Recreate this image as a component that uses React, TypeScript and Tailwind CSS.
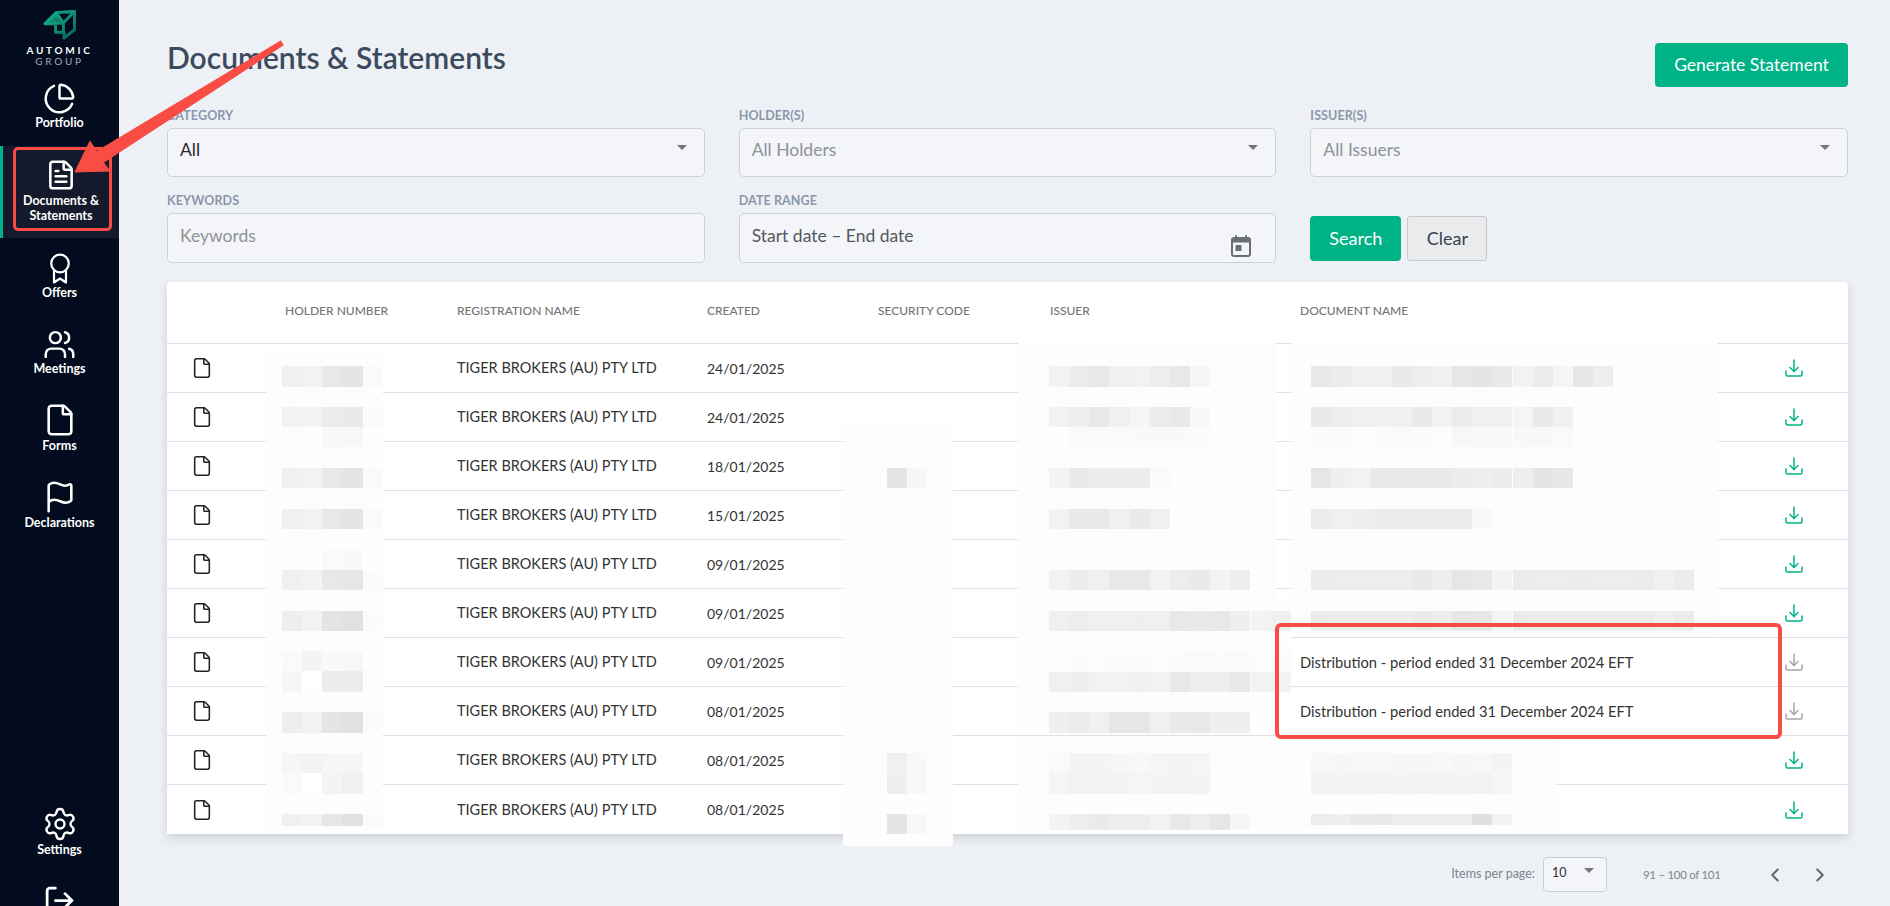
import React from "react";
import { ChartPie, FileText, Users, File, Flag, Settings, LogOut, ChevronLeft, ChevronRight } from "lucide-react";

type Strip = [number, number, number, string[]];

const A = ["f0", "f2", "e8", "e5", "fa"];
const strips: Strip[] = [
  [366, 21, 282, A],
  [407, 20, 282, ["f2", "f3", "ec", "ea", "fb"]],
  [427, 20, 282, ["fc", "fe", "f8", "f7", "fe"]],
  [468, 20, 282, A],
  [509, 20, 282, A],
  [550, 20, 282, ["fe", "fe", "fa", "f9", "fe"]],
  [570, 20, 282, ["f0", "f3", "e8", "e6", "fb"]],
  [611, 20, 282, ["ee", "f2", "e4", "e1", "fb"]],
  [651, 20, 282, ["fa", "f4", "f9", "f7", "fe"]],
  [671, 21, 282, ["f6", "ff", "ec", "ec", "fc"]],
  [712, 21, 282, ["ee", "f2", "e5", "e2", "fb"]],
  [753, 20, 282, ["f6", "f3", "f6", "f6", "fe"]],
  [773, 21, 282, ["fa", "ff", "f4", "f0", "fe"]],
  [814, 12, 282, ["f0", "f3", "e6", "e2", "fb"]],

  [366, 21, 1049, ["f2", "ec", "e8", "f0", "f2", "ed", "e8", "f6"]],
  [407, 20, 1049, ["f2", "ef", "e9", "f1", "f5", "ec", "e9", "f8"]],
  [427, 20, 1049, ["fe", "fa", "fa", "fa", "f9", "f9", "f9", "fb"]],
  [468, 20, 1049, ["f4", "ea", "ec", "ec", "ec", "fa"]],
  [509, 20, 1049, ["f2", "e9", "e9", "f1", "ea", "f0"]],
  [570, 20, 1049, ["f2", "ec", "f0", "e8", "e8", "f2", "ed", "ea", "f3", "ee"]],
  [611, 20, 1049, ["f0", "ed", "f0", "f0", "ef", "f0", "e8", "ea", "e8", "ef", "f3", "f0"]],
  [651, 21, 1049, ["fd", "fb", "fc", "fb", "fb", "fc", "fb", "fa", "fb", "fa", "fc", "fb"]],
  [672, 20, 1049, ["f0", "ee", "f2", "f2", "f0", "f2", "e8", "ee", "ee", "e8", "f2", "f2"]],
  [712, 21, 1049, ["ef", "eb", "f0", "e6", "e6", "f0", "ea", "e8", "ef", "ef"]],
  [753, 20, 1049, ["fa", "f4", "f4", "f6", "f8", "f5", "f3", "f5"]],
  [773, 21, 1049, ["f5", "f2", "f3", "f3", "f5", "f3", "f2", "f4"]],
  [814, 16, 1049, ["f3", "ee", "ea", "ee", "ee", "f2", "e8", "ee", "e6", "f6"]],

  [366, 21, 1311, ["e8", "ec", "f0", "f0", "ea", "ee", "f0", "e6", "e5", "e9", "f2", "ec", "f5", "e6", "ee"]],
  [407, 20, 1311, ["ea", "ee", "f0", "f0", "f0", "ea", "f2", "ec", "f0", "f0", "f5", "ea", "f0"]],
  [427, 20, 1311, ["fb", "fa", "fd", "fb", "fa", "fb", "fd", "f7", "f8", "f8", "f8", "f7", "fa"]],
  [468, 20, 1311, ["e6", "ef", "f2", "e8", "e8", "e8", "ea", "ec", "ee", "ec", "ee", "e5", "e7"]],
  [509, 20, 1311, ["ec", "f0", "ee", "ec", "ec", "ec", "ec", "ec", "f8"]],
  [570, 20, 1311, ["eb", "ed", "ed", "ed", "ed", "ea", "ee", "e6", "e8", "f4", "eb", "ed", "ed", "ec", "ed", "ed", "ec", "f0", "ec"]],
  [611, 20, 1311, ["eb", "ed", "ed", "ed", "ed", "ea", "ee", "e6", "e8", "f4", "eb", "ed", "ed", "ec", "ed", "ed", "ec", "f0", "ec"]],
  [753, 20, 1311, ["f8", "f6", "f8", "f8", "f6", "f6", "f8", "f6", "f7", "f4"]],
  [773, 21, 1311, ["f4", "f4", "f4", "f3", "f4", "f3", "f4", "f4", "f2", "f6"]],
  [814, 11, 1311, ["ed", "ef", "ea", "e8", "ee", "ee", "ee", "ee", "e0", "f2"]],

  [468, 20, 887, ["e4", "f6"]],
  [753, 20, 887, ["f0", "f8"]],
  [773, 21, 887, ["ee", "f8"]],
  [814, 20, 887, ["e4", "f8"]],
];

const patches: [number, number, number, number][] = [
  [266, 352, 117, 478],
  [843, 425, 110, 421],
  [1018, 343, 258, 290],
  [1291, 343, 427, 290],
  [1018, 600, 273, 83],
  [1018, 683, 257, 52],
  [1018, 737, 539, 93],
];

const dates = [
  "24/01/2025", "24/01/2025", "18/01/2025", "15/01/2025", "09/01/2025",
  "09/01/2025", "09/01/2025", "08/01/2025", "08/01/2025", "08/01/2025",
];

const ROW = "grid grid-cols-[118px_172px_250px_171px_172px_250px_1fr_108px] items-center";

function Download({ muted }: { muted?: boolean }) {
  return (
    <svg width="20" height="20" viewBox="0 0 20 20" fill="none" stroke={muted ? "#a3a5a8" : "#00b386"} strokeWidth="1.5" strokeLinecap="round" strokeLinejoin="round">
      <path d="M10 2v11.5" />
      <path d="M6 9.5l4 4 4-4" />
      <path d="M2 13v3.5a1.5 1.5 0 0 0 1.5 1.5h13a1.5 1.5 0 0 0 1.5-1.5V13" />
    </svg>
  );
}

function Caret({ className }: { className?: string }) {
  return <div className={"h-0 w-0 border-x-[5px] border-t-[5px] border-x-transparent border-t-[#757575] " + (className ?? "")} />;
}

function Field({ label, value, placeholder, caret, calendar }: { label: string; value: string; placeholder?: boolean; caret?: boolean; calendar?: boolean }) {
  return (
    <div className="flex flex-col">
      <div className="mb-[4px] h-[16px] text-[12.5px] font-bold leading-[16px] tracking-[0.1px] text-[#8b97ab]">{label}</div>
      <div className={"relative flex items-start rounded-[5px] border border-[#ccd1d7] bg-[#f3f5f9] pl-[12px] text-[17.5px] leading-[24px] " + (caret ? "h-[49px] pt-[9px] " : "h-[50px] pt-[10px] ") + (placeholder ? "text-[#8f9296]" : calendar ? "text-[#55585c]" : "text-[#2a2a2a]")}>
        {value}
        {caret && <Caret className="absolute right-[17px] top-[16px]" />}
        {calendar && (
          <svg className="absolute right-[24px] top-[21px]" width="20" height="22" viewBox="0 0 20 22" fill="none">
            <path d="M5 1v3M15 1v3" stroke="#6b6e72" strokeWidth="2" strokeLinecap="round" />
            <rect x="1" y="3" width="18" height="18" rx="2" stroke="#6b6e72" strokeWidth="2" />
            <rect x="1" y="3" width="18" height="4.5" fill="#6b6e72" />
            <rect x="4.5" y="10" width="6" height="6" fill="#6b6e72" />
          </svg>
        )}
      </div>
    </div>
  );
}

function NavItem({ icon, label, className }: { icon: React.ReactNode; label: React.ReactNode; className?: string }) {
  return (
    <div className={"flex shrink-0 flex-col items-center text-center text-[12.5px] font-bold leading-[15px] text-white " + (className ?? "")}>
      {icon}
      <div>{label}</div>
    </div>
  );
}

export default function App() {
  return (
    <div className="relative flex h-screen w-full overflow-hidden bg-[#edf0f4] font-[Lato,sans-serif]">
      <aside className="flex w-[119px] shrink-0 flex-col items-stretch bg-[#020c1e]">
        <div className="flex shrink-0 flex-col items-center pt-[10px]">
          <svg width="33" height="30" viewBox="50 28 100 92" fill="none" strokeLinejoin="round">
            <defs>
              <linearGradient id="lg" x1="0" y1="0" x2="1" y2="1">
                <stop offset="0" stopColor="#16b88f" />
                <stop offset="1" stopColor="#0a6655" />
              </linearGradient>
            </defs>
            <path d="M55 70 L90 36 L112 68 Z" fill="url(#lg)" />
            <path d="M55 70 L90 36 L146 32 L146 88 L114 114 L114 96 L88 96 L88 70 Z M55 70 L112 68 L146 32 M112 68 L112 96 M90 36 L112 68" stroke="url(#lg)" strokeWidth="9" />
          </svg>
          <div className="mt-[5px] text-[10px] font-bold leading-[11px] tracking-[2.7px] text-white">AUTOMIC</div>
          <div className="text-[10px] leading-[10px] tracking-[2.7px] text-[#a6a9ae]">GROUP</div>
        </div>
        <NavItem className="mt-[16px]" icon={<ChartPie size={33} strokeWidth={1.8} />} label="Portfolio" />
        <div className="mt-[16px] flex h-[92px] shrink-0 flex-col items-center border-l-[3px] border-[#00b386] bg-[#141a2b] pt-[13px] text-center text-[12.5px] font-bold leading-[15px] text-white">
          <FileText size={32} strokeWidth={1.9} className="mb-[2px]" />
          <div>Documents &<br />Statements</div>
        </div>
        <NavItem
          className="mt-[15px]"
          icon={
            <svg width="22" height="31" viewBox="0 0 22 31" fill="none" stroke="currentColor" strokeWidth="2.2" strokeLinejoin="round" className="mb-[1px]">
              <circle cx="11" cy="10.5" r="8.8" />
              <path d="M5 18v11.5l6-4 6 4V18" />
            </svg>
          }
          label="Offers"
        />
        <NavItem className="mt-[28px]" icon={<Users size={33} strokeWidth={1.8} />} label="Meetings" />
        <NavItem className="mt-[27px]" icon={<File size={34} strokeWidth={1.8} className="mb-[1px]" />} label="Forms" />
        <NavItem className="mt-[27px]" icon={<Flag size={34} strokeWidth={1.8} className="mb-[1px]" />} label="Declarations" />
        <NavItem className="mt-[276px]" icon={<Settings size={36} strokeWidth={1.6} />} label="Settings" />
        <NavItem className="mt-[27px]" icon={<LogOut size={33} strokeWidth={2} />} label="" />
      </aside>

      <main className="min-w-0 flex-1 pl-[48px] pr-[42px] pt-[43px]">
        <div className="flex h-[44px] items-start justify-between">
          <h1 className="text-[30px] font-semibold leading-[28px] text-[#3b4a5c]">Documents &amp; Statements</h1>
          <button className="h-[44px] w-[193px] rounded-[4px] bg-[#00b386] text-[17.5px] text-white">Generate Statement</button>
        </div>
        <div className="mt-[21px] grid grid-cols-3 gap-x-[34px] gap-y-[16px]">
          <Field label="CATEGORY" value="All" caret />
          <Field label="HOLDER(S)" value="All Holders" placeholder caret />
          <Field label="ISSUER(S)" value="All Issuers" placeholder caret />
          <Field label="KEYWORDS" value="Keywords" placeholder />
          <Field label="DATE RANGE" value="Start date – End date" calendar />
          <div className="flex items-start gap-[6px] pt-[23px]">
            <button className="h-[45px] w-[91px] rounded-[4px] bg-[#00b386] text-[18px] text-white">Search</button>
            <button className="h-[45px] w-[80px] rounded-[3px] border border-[#c4c8cc] bg-[#e9ebed] text-[18px] text-[#38424f]">Clear</button>
          </div>
        </div>

        <div className="mt-[19px] rounded-t-[4px] bg-white shadow-[0_4px_10px_rgba(60,70,90,0.18)]">
          <div className={ROW + " h-[62px] border-b border-[#e0e0e0] pb-[4px] text-[12px] font-medium text-[#757575]"}>
            <div />
            <div>HOLDER NUMBER</div>
            <div>REGISTRATION NAME</div>
            <div>CREATED</div>
            <div>SECURITY CODE</div>
            <div>ISSUER</div>
            <div>DOCUMENT NAME</div>
            <div />
          </div>
          {dates.map((d, i) => (
            <div key={i} className={ROW + " h-[49px] text-[14.5px] text-[#333333] " + (i < 9 ? "border-b border-[#e0e0e0]" : "")}>
              <div className="pl-[24px]">
                <File size={22} strokeWidth={1.7} className="text-[#222222]" />
              </div>
              <div />
              <div>TIGER BROKERS (AU) PTY LTD</div>
              <div className="text-[14px]">{d}</div>
              <div />
              <div />
              <div className="text-[14.7px]">{i === 6 || i === 7 ? "Distribution - period ended 31 December 2024 EFT" : ""}</div>
              <div className="flex justify-center">
                <Download muted={i === 6 || i === 7} />
              </div>
            </div>
          ))}
        </div>

        <div className="mt-[23px] flex h-[35px] items-center text-[12.5px] text-[#7f858d]">
          <div className="ml-auto">Items per page:</div>
          <div className="relative ml-[8px] h-[35px] w-[64px] rounded-[4px] border border-[#c9ced5] bg-[#f3f5f9] pl-[8px] pt-[6px] leading-[18px] text-[#333333]">
            10
            <Caret className="absolute right-[12px] top-[10px]" />
          </div>
          <div className="ml-[36px] w-[121px] text-[11.5px] tracking-[-0.3px]">91 – 100 of 101</div>
          <ChevronLeft size={22} strokeWidth={2.2} className="text-[#666666]" />
          <ChevronRight size={22} strokeWidth={2.2} className="ml-[23px] mr-[17px] text-[#666666]" />
        </div>
      </main>

      {/* Redaction mosaic lying over the table */}
      <div className="pointer-events-none absolute inset-0">
        {patches.map(([x, y, w, h], i) => (
          <div key={i} className="absolute bg-[#fdfdfd]" style={{ left: x, top: y, width: w, height: h }} />
        ))}
        {strips.map(([y, h, x, shades], i) =>
          shades.map((s, j) => (
            <div key={i + "-" + j} className="absolute" style={{ left: x + j * 20.15, top: y, width: 20.15, height: h, backgroundColor: "#" + s + s + s }} />
          ))
        )}
      </div>

      {/* Annotations lying over the page */}
      <div className="absolute left-[13px] top-[147px] h-[84px] w-[99px] rounded-[5px] border-[3px] border-[#f84c45]" />
      <div className="absolute left-[1275px] top-[623px] h-[116px] w-[507px] rounded-[6px] border-[4px] border-[#f84c45]" />
      <svg className="pointer-events-none absolute left-0 top-0" width="300" height="200" viewBox="0 0 300 200">
        <polygon points="75,172 90,141 96.6,151.5 280.7,40.9 283.3,45.1 103.4,162.5 110,171" fill="#f84c45" stroke="#f84c45" strokeWidth="1" strokeLinejoin="round" />
      </svg>
    </div>
  );
}
